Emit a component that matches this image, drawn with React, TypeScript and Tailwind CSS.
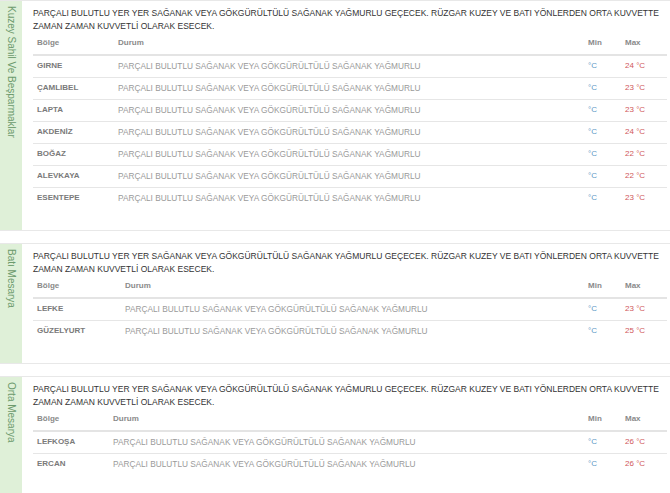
import React from 'react';

interface Row {
  name: string;
  max: number;
}

interface Region {
  title: string;
  nameCol: string;
  rows: Row[];
}

const DESC_1 = 'PARÇALI BULUTLU YER YER SAĞANAK VEYA GÖKGÜRÜLTÜLÜ SAĞANAK YAĞMURLU GEÇECEK. RÜZGAR KUZEY VE BATI YÖNLERDEN ORTA KUVVETTE';
const DESC_2 = 'ZAMAN ZAMAN KUVVETLİ OLARAK ESECEK.';
const STATE = 'PARÇALI BULUTLU SAĞANAK VEYA GÖKGÜRÜLTÜLÜ SAĞANAK YAĞMURLU';

const regions: Region[] = [
  {
    title: 'Kuzey Sahil Ve Beşparmaklar',
    nameCol: 'w-[81px]',
    rows: [
      { name: 'GIRNE', max: 24 },
      { name: 'ÇAMLIBEL', max: 23 },
      { name: 'LAPTA', max: 23 },
      { name: 'AKDENİZ', max: 24 },
      { name: 'BOĞAZ', max: 22 },
      { name: 'ALEVKAYA', max: 22 },
      { name: 'ESENTEPE', max: 23 },
    ],
  },
  {
    title: 'Batı Mesarya',
    nameCol: 'w-[88px]',
    rows: [
      { name: 'LEFKE', max: 23 },
      { name: 'GÜZELYURT', max: 25 },
    ],
  },
  {
    title: 'Orta Mesarya',
    nameCol: 'w-[76px]',
    rows: [
      { name: 'LEFKOŞA', max: 26 },
      { name: 'ERCAN', max: 26 },
    ],
  },
];

function RegionPanel({ region }: { region: Region }) {
  return (
    <div className="flex border-y border-[#e8e8e8] mb-[12px]">
      <div className="w-[22px] shrink-0 bg-[#dff0d8] flex justify-center pt-[5px]">
        <span className="[writing-mode:vertical-rl] text-[10px] leading-[10px] text-[#6c9a6c] whitespace-nowrap">
          {region.title}
        </span>
      </div>
      <div className="flex-1 pl-[11px] pr-[3px] pt-[6px] pb-[21px]">
        <p className="text-[8.5px] leading-[12.5px] text-[#333] whitespace-nowrap">
          {DESC_1}
          <br />
          {DESC_2}
        </p>
        <table className="w-full table-fixed border-collapse text-[8px]">
          <colgroup>
            <col className={region.nameCol} />
            <col />
            <col className="w-[37px]" />
            <col className="w-[42px]" />
          </colgroup>
          <thead>
            <tr className="h-[23px] border-b-2 border-[#e4e4e4] text-left text-[#8a8a8a]">
              <th className="px-[4px] font-bold">Bölge</th>
              <th className="px-[4px] font-bold">Durum</th>
              <th className="px-0 font-bold">Min</th>
              <th className="px-0 font-bold">Max</th>
            </tr>
          </thead>
          <tbody>
            {region.rows.map((r, i) => (
              <tr
                key={r.name}
                className={`h-[22px] ${i < region.rows.length - 1 ? 'border-b border-[#e6e6e6]' : ''}`}
              >
                <td className="px-[4px] font-bold text-[#7a7a7a]">{r.name}</td>
                <td className="px-[4px] text-[8.3px] text-[#9a9a9a] whitespace-nowrap">{STATE}</td>
                <td className="px-0 text-[#5d98c6]">°C</td>
                <td className="px-0 text-[#d0585a]">{r.max} °C</td>
              </tr>
            ))}
          </tbody>
        </table>
      </div>
    </div>
  );
}

export default function App() {
  return (
    <div className="w-[670px] h-[493px] overflow-hidden bg-white font-['Liberation_Sans',Arial,sans-serif]">
      {regions.map(r => (
        <RegionPanel key={r.title} region={r} />
      ))}
    </div>
  );
}
